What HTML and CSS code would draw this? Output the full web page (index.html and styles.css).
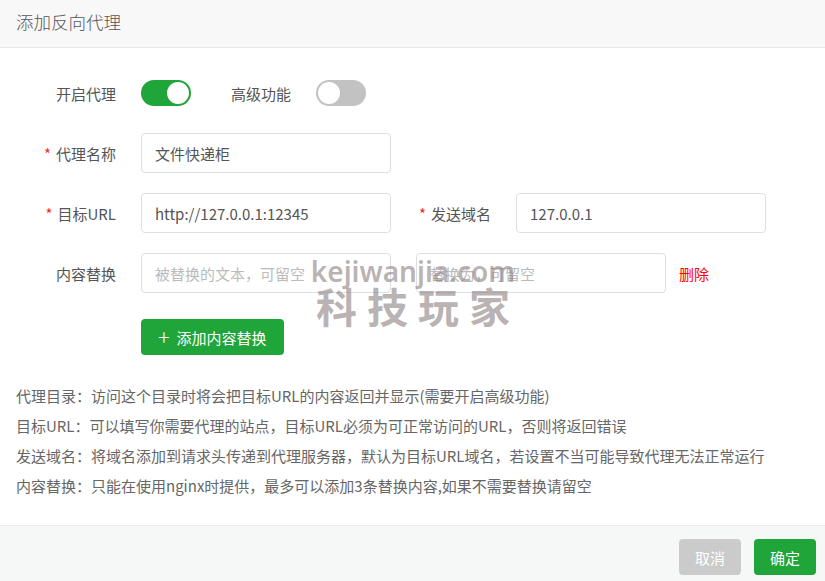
FILE: index.html
```html
<!DOCTYPE html>
<html lang="zh-CN">
<head>
<meta charset="utf-8">
<title>添加反向代理</title>
<link rel="stylesheet" href="styles.css">
</head>
<body>
<div class="dialog">
  <div class="header">添加反向代理</div>
  <div class="body">
    <div class="row">
      <label class="label">开启代理</label>
      <span class="switch on"><span class="knob"></span></span>
      <label class="label-inline">高级功能</label>
      <span class="switch off"><span class="knob"></span></span>
    </div>
    <div class="row">
      <label class="label"><span class="req">*</span>代理名称</label>
      <input class="input" type="text" value="文件快递柜">
    </div>
    <div class="row">
      <label class="label"><span class="req">*</span>目标URL</label>
      <input class="input" type="text" value="http://127.0.0.1:12345">
      <label class="label"><span class="req">*</span>发送域名</label>
      <input class="input" type="text" value="127.0.0.1">
    </div>
    <div class="row">
      <label class="label">内容替换</label>
      <input class="input" type="text" placeholder="被替换的文本，可留空">
      <input class="input second" type="text" placeholder="替换为，可留空">
      <a class="del">删除</a>
    </div>
    <div class="row btn-row">
      <button class="btn-add"><span class="plus">+</span>添加内容替换</button>
    </div>
    <ul class="help">
      <li>代理目录：访问这个目录时将会把目标URL的内容返回并显示(需要开启高级功能)</li>
      <li>目标URL：可以填写你需要代理的站点，目标URL必须为可正常访问的URL，否则将返回错误</li>
      <li>发送域名：将域名添加到请求头传递到代理服务器，默认为目标URL域名，若设置不当可能导致代理无法正常运行</li>
      <li>内容替换：只能在使用nginx时提供，最多可以添加3条替换内容,如果不需要替换请留空</li>
    </ul>
  </div>
  <div class="footer">
    <button class="btn cancel">取消</button>
    <button class="btn ok">确定</button>
  </div>
  <div class="watermark">
    <div class="wm-en">kejiwanjia.com</div>
    <div class="wm-cn">科技玩家</div>
  </div>
</div>
</body>
</html>
```

FILE: styles.css
```css
* { box-sizing: border-box; }
html, body { margin: 0; padding: 0; }
body {
  font-family: "Noto Sans CJK SC", "Noto Sans", sans-serif;
  background: #fff;
  color: #555;
  width: 825px;
  height: 581px;
  overflow: hidden;
}
.dialog {
  position: relative;
  width: 825px;
  height: 581px;
  display: flex;
  flex-direction: column;
}
.header {
  height: 48px;
  line-height: 43px;
  padding-left: 16px;
  font-size: 17.5px;
  font-weight: 300;
  color: #555;
  background: #f8f8f8;
  border-bottom: 1px solid #e9e9e9;
}
.body {
  flex: 1;
  padding: 25px 0 0 16px;
}
.row {
  display: flex;
  align-items: center;
  height: 40px;
  margin-bottom: 20px;
}
.label {
  width: 125px;
  padding-right: 25px;
  text-align: right;
  font-size: 15px;
  color: #555;
  flex: none;
}
.req {
  color: #ef2b2b;
  margin-right: 5px;
}
.label-inline {
  font-size: 15px;
  color: #555;
  margin-left: 40px;
  margin-right: 25px;
}
.switch {
  position: relative;
  display: inline-block;
  width: 50px;
  height: 26px;
  border-radius: 13px;
  flex: none;
}
.switch.on { background: #20a53a; }
.switch.off { background: #c2c2c2; }
.knob {
  position: absolute;
  top: 2px;
  width: 22px;
  height: 22px;
  border-radius: 50%;
  background: #fff;
}
.switch.on .knob { right: 2px; }
.switch.off .knob { left: 2px; }
.input {
  width: 250px;
  height: 40px;
  border: 1px solid #dcdfe6;
  border-radius: 4px;
  padding: 0 13px;
  font-family: inherit;
  font-size: 15px;
  color: #555;
  outline: none;
  background: #fff;
  flex: none;
}
.input::placeholder { color: #bbb; }
.input.second { margin-left: 25px; }
.del {
  margin-left: 13px;
  color: #f00;
  font-size: 15px;
}
.btn-row { margin-top: 26px; height: 36px; margin-bottom: 26px; }
.body .row:nth-child(4) { margin-bottom: 0; }
.btn-add {
  margin-left: 125px;
  width: 143px;
  height: 36px;
  padding: 0;
  background: #20a53a;
  color: #fff;
  border: none;
  border-radius: 4px;
  font-family: inherit;
  font-size: 15px;
  display: flex;
  align-items: center;
  justify-content: center;
}
.plus {
  font-size: 21px;
  font-weight: 200;
  margin-right: 7px;
  line-height: 1;
  position: relative;
  top: -1px;
}
.help {
  list-style: none;
  margin: 0;
  padding: 0;
}
.help li {
  font-size: 15px;
  line-height: 30px;
  color: #666;
}
.footer {
  height: 56px;
  background: #f6f7f7;
  border-top: 1px solid #ececec;
  display: flex;
  justify-content: flex-end;
  align-items: flex-start;
  gap: 13px;
  padding: 13px 9px 0 0;
}
.btn {
  height: 36px;
  width: 62px;
  border: none;
  border-radius: 4px;
  font-family: inherit;
  font-size: 15px;
  color: #fff;
}
.btn.cancel { background: #cbcbcb; }
.btn.ok { background: #20a53a; }
.watermark {
  position: absolute;
  left: 306px;
  top: 252px;
  width: 214px;
  color: rgba(140, 128, 128, 0.6);
  text-align: center;
  pointer-events: none;
}
.wm-en {
  font-family: "Noto Sans", sans-serif;
  font-size: 28px;
  font-weight: 600;
  line-height: 38px;
}
.wm-cn {
  font-family: "Noto Sans CJK SC", sans-serif;
  font-size: 41px;
  font-weight: 700;
  letter-spacing: 10px;
  margin-right: -10px;
  line-height: 42px;
  margin-top: -6px;
}
```
